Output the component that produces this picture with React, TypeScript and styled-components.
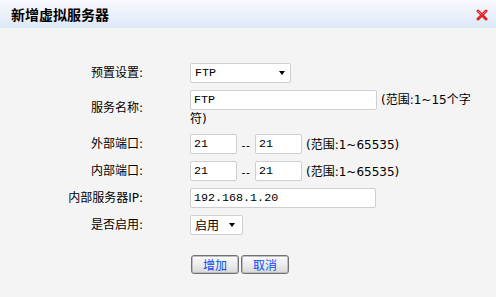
import React from "react";
import styled, { createGlobalStyle } from "styled-components";

const GlobalStyle = createGlobalStyle`
  html, body {
    margin: 0;
    padding: 0;
    background: #f4f4f4;
  }
  body {
    font-family: "DejaVu Sans", "Noto Sans CJK SC", sans-serif;
    font-size: 12px;
    color: #000;
  }
`;

const Dialog = styled.div`
  width: 496px;
  height: 297px;
  background: #f4f4f4;
  overflow: hidden;
`;

const Header = styled.div`
  height: 28px;
  display: flex;
  align-items: center;
  justify-content: space-between;
  padding: 0 8px 0 11px;
  box-sizing: border-box;
  background: linear-gradient(to bottom, #f7f9fd 0%, #eef3fb 40%, #dde9f9 100%);
`;

const Title = styled.div`
  font-family: "Noto Sans CJK SC", sans-serif;
  font-size: 14px;
  font-weight: 700;
  line-height: 14px;
  color: #000;
`;

const CloseIcon = () => (
  <svg width="12" height="12" viewBox="0 0 12 12">
    <path d="M2 2 L10 10 M10 2 L2 10" stroke="#e0242a" strokeWidth="3" strokeLinecap="round" />
    <path d="M2.5 2.5 L5 5 M9.5 2.5 L7 5" stroke="#f58a8a" strokeWidth="1" strokeLinecap="round" />
  </svg>
);

const CloseButton = styled.div`
  width: 12px;
  height: 12px;
  display: flex;
  margin-top: 1px;
`;

const Form = styled.div`
  display: grid;
  grid-template-columns: 143px 286px;
  column-gap: 47px;
  row-gap: 7px;
  margin-top: 35px;
`;

const Label = styled.div`
  text-align: right;
  align-self: center;
  white-space: nowrap;
  line-height: 14px;
`;

const Field = styled.div`
  display: flex;
  align-items: center;
`;

const FlowField = styled.div`
  line-height: 16px;
`;

const TextInput = styled.input<{ $w: number }>`
  box-sizing: border-box;
  width: ${(p) => p.$w}px;
  height: 20px;
  margin: 0;
  padding: 0 3px;
  border: 1px solid #cfcfcf;
  border-radius: 2px;
  background: #fff;
  font-family: "Liberation Mono", monospace;
  font-size: 11.7px;
  color: #000;
  outline: none;
  vertical-align: middle;
`;

const SelectBox = styled.div<{ $w: number; $pr: number }>`
  box-sizing: border-box;
  width: ${(p) => p.$w}px;
  height: 20px;
  display: flex;
  align-items: center;
  justify-content: space-between;
  padding: 0 ${(p) => p.$pr}px 0 4px;
  border: 1px solid #cfcfcf;
  border-radius: 2px;
  background: #fff;
`;

const SelectText = styled.span<{ $mono?: boolean }>`
  font-family: ${(p) => (p.$mono ? '"Liberation Mono", monospace' : '"Noto Sans CJK SC", sans-serif')};
  font-size: ${(p) => (p.$mono ? "11.7px" : "12px")};
  line-height: 14px;
`;

const Arrow = styled.span`
  width: 0;
  height: 0;
  border-left: 3px solid transparent;
  border-right: 3px solid transparent;
  border-top: 4px solid #000;
`;

const Hint = styled.span`
  margin-left: 4px;
  font-family: "DejaVu Sans", "Noto Sans CJK SC", sans-serif;
  font-size: 12px;
  vertical-align: middle;
  white-space: normal;
`;

const Dash = styled.span`
  width: 18px;
  text-align: center;
  font-family: "DejaVu Sans", sans-serif;
  font-size: 11px;
  line-height: 12px;
  padding-top: 5px;
  letter-spacing: 0.5px;
`;

const Buttons = styled.div`
  grid-column: 2;
  display: flex;
  gap: 2px;
  margin-top: 13px;
  padding-left: 1px;
`;

const Button = styled.button`
  box-sizing: border-box;
  width: 48px;
  height: 19px;
  margin: 0;
  padding: 0;
  border: 1px solid #727272;
  border-radius: 3px;
  box-shadow: inset 0 0 0 1px #bdbdbd, inset 0 2px 0 #ffffff;
  background: linear-gradient(to bottom, #fbfbfb 0%, #ececec 50%, #d9d9d9 100%);
  color: #0a4df2;
  font-family: "Noto Sans CJK SC", sans-serif;
  font-size: 12px;
  line-height: 15px;
  display: flex;
  align-items: center;
  justify-content: center;
`;

const PortInput = ({ value }: { value: string }) => <TextInput $w={47} value={value} readOnly />;

export default function App() {
  return (
    <>
      <GlobalStyle />
      <Dialog>
        <Header>
          <Title>新增虚拟服务器</Title>
          <CloseButton>
            <CloseIcon />
          </CloseButton>
        </Header>
        <Form>
          <Label>预置设置:</Label>
          <Field>
            <SelectBox $w={101} $pr={5}>
              <SelectText $mono>FTP</SelectText>
              <Arrow />
            </SelectBox>
          </Field>

          <Label>服务名称:</Label>
          <FlowField>
            <TextInput $w={187} value="FTP" readOnly />
            <Hint>(范围:1~15个字符)</Hint>
          </FlowField>

          <Label>外部端口:</Label>
          <Field>
            <PortInput value="21" />
            <Dash>--</Dash>
            <PortInput value="21" />
            <Hint>(范围:1~65535)</Hint>
          </Field>

          <Label>内部端口:</Label>
          <Field>
            <PortInput value="21" />
            <Dash>--</Dash>
            <PortInput value="21" />
            <Hint>(范围:1~65535)</Hint>
          </Field>

          <Label>内部服务器IP:</Label>
          <Field>
            <TextInput $w={186} value="192.168.1.20" readOnly />
          </Field>

          <Label>是否启用:</Label>
          <Field>
            <SelectBox $w={53} $pr={7}>
              <SelectText>启用</SelectText>
              <Arrow />
            </SelectBox>
          </Field>

          <Buttons>
            <Button>增加</Button>
            <Button>取消</Button>
          </Buttons>
        </Form>
      </Dialog>
    </>
  );
}
